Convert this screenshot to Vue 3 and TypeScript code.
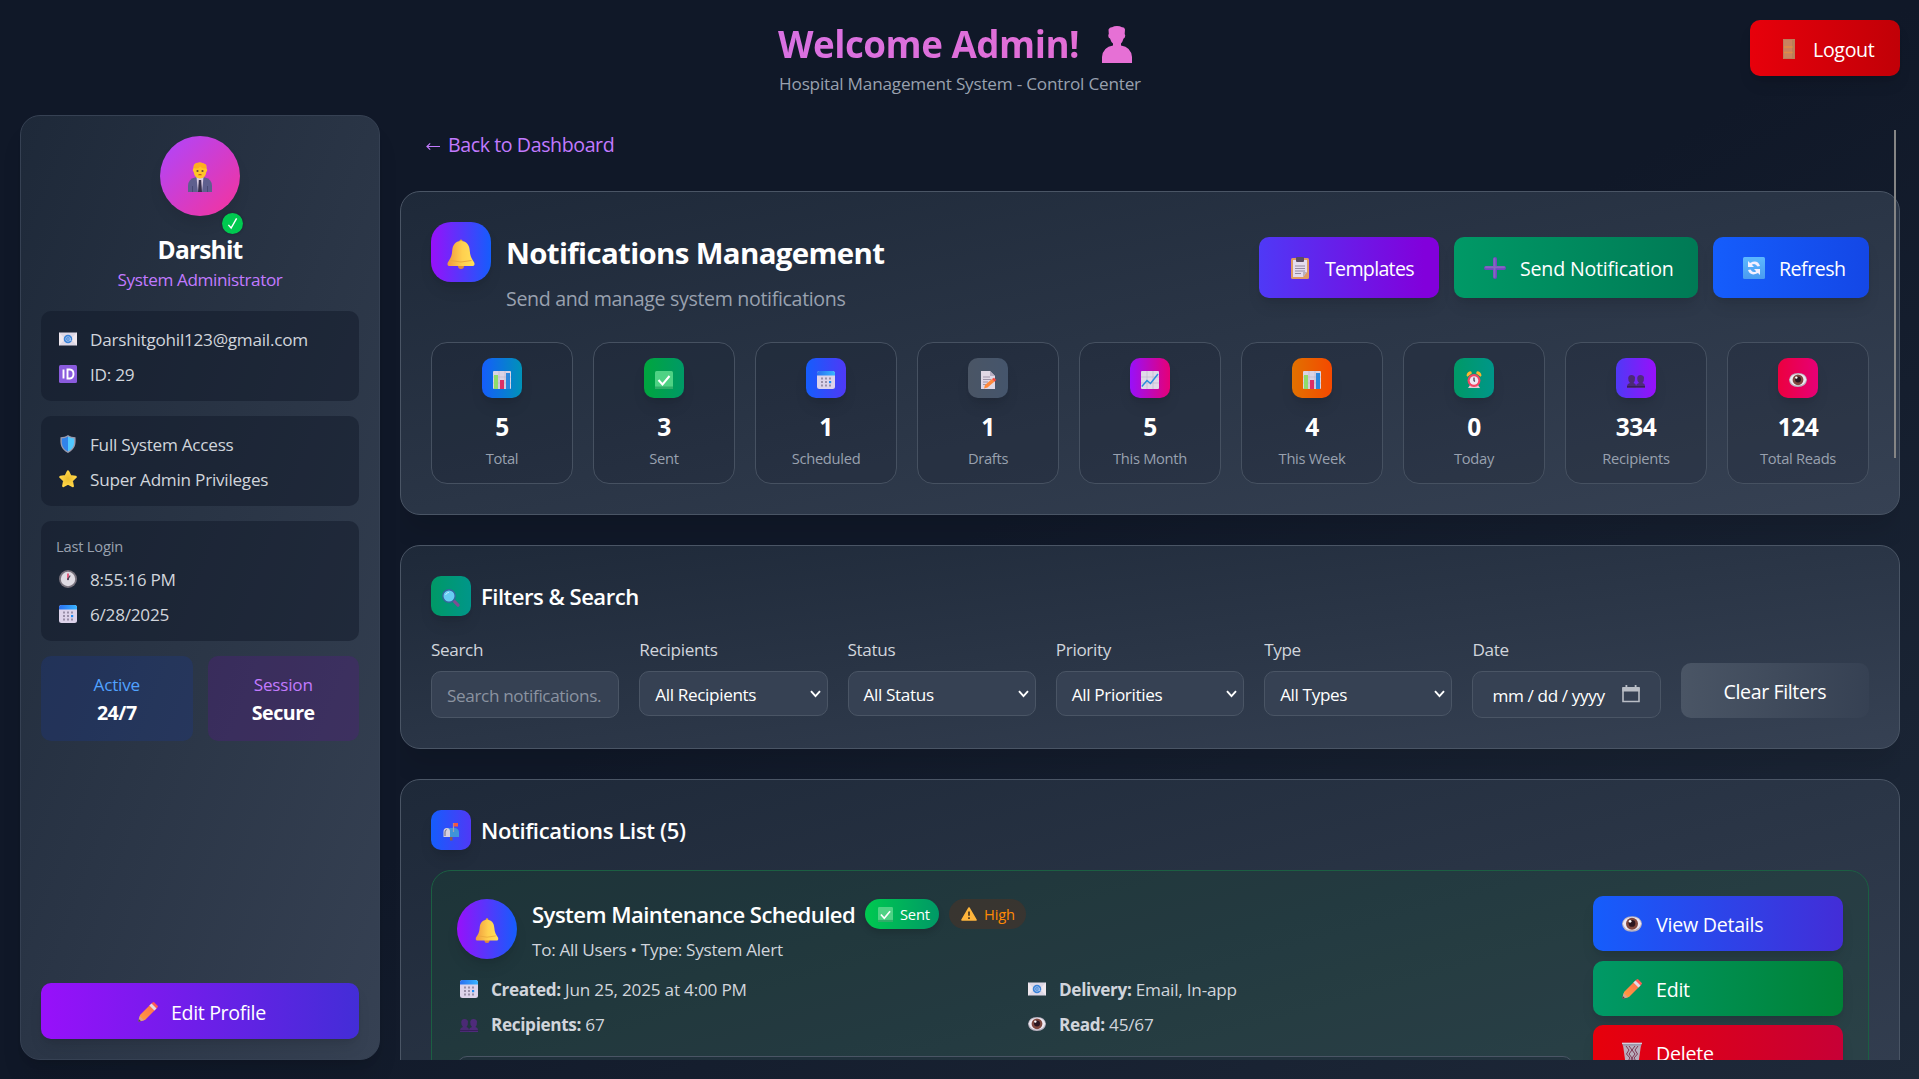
<script setup lang="ts">
interface Stat { value: string; label: string; icon: string; from: string; to: string }
interface Filter { label: string; value: string; kind: 'text' | 'select' | 'date' }

const stats: Stat[] = [
  { value: '5', label: 'Total', icon: 'bars', from: '#155dfc', to: '#0092b8' },
  { value: '3', label: 'Sent', icon: 'check', from: '#00a63e', to: '#009966' },
  { value: '1', label: 'Scheduled', icon: 'calendar', from: '#155dfc', to: '#4f39f6' },
  { value: '1', label: 'Drafts', icon: 'memo', from: '#4a5565', to: '#45556c' },
  { value: '5', label: 'This Month', icon: 'chart', from: '#9810fa', to: '#e60076' },
  { value: '4', label: 'This Week', icon: 'bars', from: '#e17100', to: '#f54900' },
  { value: '0', label: 'Today', icon: 'alarm', from: '#009966', to: '#009689' },
  { value: '334', label: 'Recipients', icon: 'people', from: '#4f39f6', to: '#9810fa' },
  { value: '124', label: 'Total Reads', icon: 'eye', from: '#ec003f', to: '#e60076' },
]

const filters: Filter[] = [
  { label: 'Search', value: 'Search notifications...', kind: 'text' },
  { label: 'Recipients', value: 'All Recipients', kind: 'select' },
  { label: 'Status', value: 'All Status', kind: 'select' },
  { label: 'Priority', value: 'All Priorities', kind: 'select' },
  { label: 'Type', value: 'All Types', kind: 'select' },
  { label: 'Date', value: 'mm / dd / yyyy', kind: 'date' },
]

const details = [
  { icon: 'calendar', label: 'Created:', value: 'Jun 25, 2025 at 4:00 PM' },
  { icon: 'mail', label: 'Delivery:', value: 'Email, In-app' },
  { icon: 'people', label: 'Recipients:', value: '67' },
  { icon: 'eye', label: 'Read:', value: '45/67' },
]
</script>

<template>
  <svg class="sprite" aria-hidden="true">
    <defs>
      <linearGradient id="g-bell" x1="0" x2="1"><stop offset="0" stop-color="#f09a3e" /><stop offset=".55" stop-color="#ffd04f" /><stop offset="1" stop-color="#ffe05a" /></linearGradient>
      <linearGradient id="g-pencil" x1="1" y1="0" x2="0" y2="1"><stop offset="0" stop-color="#ff6a50" /><stop offset="1" stop-color="#ffa23c" /></linearGradient>
      <linearGradient id="g-sky" x1="0" y1="0" x2="0" y2="1"><stop offset="0" stop-color="#5cb8ff" /><stop offset="1" stop-color="#4a9bf0" /></linearGradient>
      <linearGradient id="g-cal" x1="0" x2="1"><stop offset="0" stop-color="#2a6ff0" /><stop offset="1" stop-color="#37b4ff" /></linearGradient>
      <radialGradient id="g-star"><stop offset="0" stop-color="#e9bd2f" /><stop offset="1" stop-color="#ffd445" /></radialGradient>
    </defs>
    <symbol id="bell" viewBox="0 0 28 30">
      <circle cx="14" cy="2" r="1.6" fill="#e6a52f" /><circle cx="14" cy="27" r="3" fill="#e08a3a" />
      <path d="M14 2C8 2 5.5 6.500 5.200 12 4.900 17.500 3 20 .8 23.500.2 25 .4 27 2 27h24c1.600 0 1.800-2 1.200-3.500C25 20 23.100 17.500 22.800 12 22.500 6.500 20 2 14 2z" fill="url(#g-bell)" />
      <path d="M3.500 21.500Q14 24.500 24.500 21.500" fill="none" stroke="#e9a93c" stroke-width="1" />
    </symbol>
    <symbol id="mail" viewBox="0 0 18 18">
      <rect y="2.500" width="18" height="13" fill="#ded8e6" /><path d="M0 2.500l6 6.500-6 6.500M18 2.500L12 9l6 6.500" fill="#f0e8ee" />
      <circle cx="9" cy="9" r="4.300" fill="#3b83d8" /><circle cx="9" cy="9" r="2.300" fill="none" stroke="#b8cdf0" stroke-width=".8" /><path d="M11.200 8v2.500h1.300" fill="none" stroke="#b8cdf0" stroke-width=".8" /><circle cx="9" cy="9" r=".8" fill="#b8cdf0" />
    </symbol>
    <symbol id="idcard" viewBox="0 0 18 18">
      <rect width="18" height="18" rx="1.500" fill="#8a5bdd" /><path d="M4.500 4.500v9M8.500 4.500v9h2.300q3.700-.4 3.700-4.500t-3.700-4.500z" fill="none" stroke="#fff" stroke-width="1.900" />
    </symbol>
    <symbol id="shield" viewBox="0 0 18 18">
      <path d="M9 0C7 1.800 4 2.200 1.500 2.200 1 9 1.500 14 9 18 16.500 14 17 9 16.500 2.200 14 2.200 11 1.800 9 0z" fill="#9a9aad" /><path d="M9 1.600C7.200 3 5 3.400 2.900 3.400 2.600 9 3 13.300 9 16.500z" fill="#3183ea" /><path d="M9 1.600c1.800 1.400 4 1.800 6.100 1.800.3 5.600-.1 9.900-6.100 13.100z" fill="#50c8ff" />
    </symbol>
    <symbol id="star" viewBox="0 0 18 18">
      <path d="M9 1.500l2.300 4.800 5.300.7-3.900 3.700 1 5.300L9 13.500 4.300 16l1-5.300L1.400 7l5.300-.7z" fill="url(#g-star)" stroke="url(#g-star)" stroke-width="2.400" stroke-linejoin="round" />
    </symbol>
    <symbol id="clock" viewBox="0 0 18 18">
      <circle cx="9" cy="9" r="9" fill="#77717c" /><circle cx="9" cy="9" r="7.200" fill="#dfdbe3" /><path d="M9 9.500V3.500" stroke="#e6335c" stroke-width="1.500" /><path d="M9 9l2.200-3.500" stroke="#4b4358" stroke-width="1.200" /><circle cx="9" cy="9.300" r="1" fill="#4b4358" />
    </symbol>
    <symbol id="calendar" viewBox="0 0 18 18">
      <rect width="18" height="18" rx="2.500" fill="#ddd3ea" /><path d="M0 4.500V2.500A2.500 2.500 0 012.500 0h13A2.500 2.500 0 0118 2.500v2z" fill="url(#g-cal)" />
      <path d="M4 6.500h2v2H4zM8 6.500h2v2H8zM12 6.500h2v2h-2zM4 10h2v2H4zM8 10h2v2H8zM4 13.500h2v2H4zM8 13.500h2v2H8zM12 13.500h2v2h-2z" fill="#998fa8" /><path d="M12 10h2.200v2.200H12z" fill="#1f8cf5" />
    </symbol>
    <symbol id="pencil" viewBox="0 0 20 20">
      <path d="M2 13L13 2l5 5L7 18 1 19.500z" fill="url(#g-pencil)" /><path d="M13 2l1.700-1.600q.8-.7 1.600 0l3.300 3.300q.7.8 0 1.600L18 7z" fill="#ff5a56" /><path d="M11.400 3.600L13.500 1.500l5 5-2.100 2.100z" fill="#e2dbe6" /><path d="M1.600 14L.4 18.500q-.2 1.400 1.200 1.100L6 18.300z" fill="#d9a38c" /><path d="M.8 17l-.5 2q0 .8.8.7l2-.5z" fill="#4b4050" />
    </symbol>
    <symbol id="silhouette" viewBox="0 0 30 37">
      <path d="M6.500 3.500Q8 1 10 1.300 12 0 15 0t5 1.300q2.500-.3 3 2.200l-.3 4.500q1 1.200.2 3.200-.5 1-1.300 1.300Q20.500 16 19 17.500v2Q29 21 30 31v6H0v-6Q1 21 11 19.500v-2Q9 16 8 12.500q-1.500-.5-1.700-2.500-.1-1.500.5-2z" fill="currentColor" />
    </symbol>
    <symbol id="official" viewBox="0 0 24 30">
      <path d="M0 30v-6q0-7 7-8.500h10q7 1.500 7 8.500v6z" fill="#5e5f8e" /><path d="M8.500 15h7L14 30h-4z" fill="#d8cbe2" /><path d="M10.800 18h2.400l.8 12h-4z" fill="#352f4c" /><path d="M4.500 24v6M19.500 24v6" stroke="#484a75" />
      <path d="M5.500 6q-.3-4 3-4.500Q12-.7 15.500 1.500 19 2 18.500 6.500 20 8 18.300 10q-.8 6-6.300 6.500Q6.500 16 5.700 10 4 8 5.500 6z" fill="#ffc527" /><path d="M6 6q5 1.500 6-1.500 3 3 6 1.500l.3-3Q14-.8 8 1 5.500 2 6 6z" fill="#ffad20" /><circle cx="9.500" cy="9" r="1.100" fill="#6d4a3a" /><circle cx="14.500" cy="9" r="1.100" fill="#6d4a3a" /><path d="M10.500 13q1.500-1 3 0" fill="none" stroke="#c4451f" stroke-width="1.100" />
    </symbol>
    <symbol id="door" viewBox="0 0 12 20">
      <rect width="12" height="20" fill="#bd7a5a" /><path d="M1 1h8v18H1z" fill="#c9835f" /><path d="M1 8h9M1 13.500h9" stroke="#e18c47" stroke-width="1.500" /><path d="M10.300 0v20" stroke="#b78358" stroke-width="1.500" />
    </symbol>
    <symbol id="clipboard" viewBox="0 0 18 22">
      <rect y="1" width="18" height="21" rx="1.500" fill="#e09a62" /><path d="M2 3h14v12l-4 5H2z" fill="#e5dcee" /><path d="M12 20v-5h4z" fill="#b9aebf" /><rect x="5" width="8" height="5" rx="1" fill="#5b4d63" /><path d="M4 9h10M4 11.500h10M4 14h10M4 16.500h6" stroke="#948aa2" stroke-width="1" />
    </symbol>
    <symbol id="plus" viewBox="0 0 22 22">
      <path d="M11 2v18M2 11h18" stroke="#7048c0" stroke-width="4" stroke-linecap="round" /><path d="M10.500 2v18M2 10.300h18" stroke="#8567c0" stroke-width="2" stroke-linecap="round" />
    </symbol>
    <symbol id="sync" viewBox="0 0 22 22">
      <rect width="22" height="22" rx="1.500" fill="url(#g-sky)" /><path d="M5 4v6h6L8.800 7.800Q12 5.500 14.500 9.500l2.500-.6Q14.500 2 7 6zM17 18v-6h-6l2.200 2.200q-3.200 2.300-5.700-1.700l-2.500.6Q7.500 20 15 16z" fill="#f4efff" />
    </symbol>
    <symbol id="bars" viewBox="0 0 18 18">
      <rect width="18" height="18" rx="1" fill="#dad3e4" /><path d="M0 6h18M0 12h18M6 0v18M12 0v18" stroke="#bdb4cb" stroke-width=".6" /><path d="M1 4h4v14H1z" fill="#8fdc6b" /><path d="M7 9h4v9H7z" fill="#dd2f65" /><path d="M13 2h4v16h-4z" fill="#2c87dc" />
    </symbol>
    <symbol id="chart" viewBox="0 0 18 18">
      <rect width="18" height="18" rx="1" fill="#e0dae8" /><path d="M0 6h18M0 12h18M6 0v18M12 0v18" stroke="#bdb4cb" stroke-width=".6" /><path d="M.8 15.500L6 9.500l3.500 3L17 3" fill="none" stroke="#2c8ddd" stroke-width="1.500" />
    </symbol>
    <symbol id="check" viewBox="0 0 18 18">
      <rect width="18" height="18" rx="1.500" fill="#4fd284" /><rect y="15.500" width="18" height="2.500" fill="#2fae69" /><path d="M3.500 9l4 4.500L14.500 5" fill="none" stroke="#fff" stroke-width="2" />
    </symbol>
    <symbol id="memo" viewBox="0 0 18 18">
      <path d="M2 0h9l5 5v13H2z" fill="#e0d8e6" /><path d="M11 0v5h5z" fill="#b7adc0" /><path d="M4 6h7M4 8.500h8M4 11h5M4 13.500h4" stroke="#9e94aa" /><path d="M6 14l7-6 2.500 2.500-7 6L5 17.500z" fill="#ff8a3d" /><path d="M13 8l2-1.200 2.300 2.300-1.800 1.600z" fill="#f2473c" />
    </symbol>
    <symbol id="alarm" viewBox="0 0 18 18">
      <path d="M1.500 4.500Q2 .5 6 .3l1 2-4.500 3.500zM16.500 4.500Q16 .5 12 .3l-1 2 4.500 3.500z" fill="#ffb52e" /><path d="M3 17l2-3h8l2 3z" fill="#e5c5d4" /><circle cx="9" cy="9.500" r="6.500" fill="#f24463" /><circle cx="9" cy="9.500" r="4.300" fill="#eee6f2" /><path d="M9 6.500v3l.8 1" fill="none" stroke="#4d3a55" stroke-width="1.300" />
    </symbol>
    <symbol id="people" viewBox="0 0 18 18">
      <path d="M0 17v-2q.3-2.500 3-3Q1 10 1.200 7 1.500 4 4.500 4T8 6.500Q8.200 10 6.500 12 9 12.500 9 15v2z" fill="#4b2a75" /><path d="M9 17v-2q.3-2.500 3-3-2-2-1.800-5Q10.500 4 13.500 4T17 6.500Q17.200 10 15.500 12 18 12.500 18 15v2z" fill="#4f2b7b" /><path d="M0 15.500h18" stroke="#371e5a" />
    </symbol>
    <symbol id="eye" viewBox="0 0 18 18">
      <path d="M0 9Q1 2.200 9 2t9 7q-1 6.800-9 7T0 9z" fill="#b9b2bf" /><path d="M.8 8.500Q2 3.200 9 3t8.200 5.500Q16 14.300 9 14.500T.8 8.500z" fill="#efe9f2" /><circle cx="9" cy="8.800" r="5.400" fill="#80483f" /><circle cx="9" cy="8.500" r="3" fill="#2b1620" /><circle cx="7.300" cy="6.600" r="1.200" fill="#fff" />
    </symbol>
    <symbol id="lens" viewBox="0 0 18 18">
      <path d="M11 11l5 5.200" stroke="#7e4d93" stroke-width="3.200" stroke-linecap="round" /><circle cx="7" cy="7" r="6.200" fill="#67cdf2" stroke="#35669e" stroke-width="1.400" /><path d="M3.500 6Q4.500 3.500 7 3.300" stroke="#b8ecff" fill="none" />
    </symbol>
    <symbol id="mailbox" viewBox="0 0 18 18">
      <path d="M8 12h2.500v5.500H8z" fill="#8b5b50" /><path d="M4 5h9q4 .5 4 4.500V14H4z" fill="#3f93d8" /><path d="M1.500 14V8.500Q1.500 5 4.800 5T8 8.500V14z" fill="#d5cfe0" /><path d="M3 13V9q0-2.300 1.800-2.300" stroke="#6e6a82" fill="none" /><path d="M11.500 9V0" stroke="#9da3b5" stroke-width="1.200" /><path d="M11.500 0H16v3.500h-4.500z" fill="#f2573e" />
    </symbol>
    <symbol id="warning" viewBox="0 0 16 14">
      <path d="M8 1l7 12H1z" fill="#ffb53c" stroke="#ffb53c" stroke-width="1.600" stroke-linejoin="round" /><path d="M8 4.500v4.300M8 10.200v1.700" stroke="#4a3620" stroke-width="1.700" />
    </symbol>
    <symbol id="trash" viewBox="0 0 20 22">
      <path d="M1 3h18l-2.500 18q-6.500 2-13 0z" fill="#b9aebd" /><path d="M4 4l3 4-2.500 4L8 16l-2.500 4M16 4l-3 4 2.500 4L12 16l2.500 4M7 4l3 4-3 4 3 4-2 4M13 4l-3 4 3 4-3 4 2 4" fill="none" stroke="#7d3552" /><path d="M0 .8h20l-.8 3H.8z" fill="#9c96aa" /><path d="M0 .8h20v1.200H0z" fill="#d4cedb" />
    </symbol>
  </svg>

  <div class="page">
    <header class="header">
      <div class="heading">
        <h1>Welcome Admin! <svg class="silhouette"><use href="#silhouette" /></svg></h1>
        <p>Hospital Management System - Control Center</p>
      </div>
      <button class="btn logout"><svg><use href="#door" /></svg><span>Logout</span></button>
    </header>

    <div class="body">
      <aside class="sidebar">
        <div class="avatar">
          <svg><use href="#official" /></svg>
          <span class="online"><svg viewBox="0 0 12 14"><path d="M1.500 8.500l3 3.500L10.500 1.500" fill="none" stroke="#fff" stroke-width="1.600" /></svg></span>
        </div>
        <h2>Darshit</h2>
        <p class="role">System Administrator</p>
        <div class="box">
          <div class="line"><svg><use href="#mail" /></svg><span>Darshitgohil123@gmail.com</span></div>
          <div class="line"><svg><use href="#idcard" /></svg><span>ID: 29</span></div>
        </div>
        <div class="box">
          <div class="line"><svg><use href="#shield" /></svg><span>Full System Access</span></div>
          <div class="line"><svg><use href="#star" /></svg><span>Super Admin Privileges</span></div>
        </div>
        <div class="box">
          <small>Last Login</small>
          <div class="line"><svg><use href="#clock" /></svg><span>8:55:16 PM</span></div>
          <div class="line"><svg><use href="#calendar" /></svg><span>6/28/2025</span></div>
        </div>
        <div class="tiles">
          <div class="tile blue"><span>Active</span><b>24/7</b></div>
          <div class="tile violet"><span>Session</span><b>Secure</b></div>
        </div>
        <button class="btn edit-profile"><svg><use href="#pencil" /></svg><span>Edit Profile</span></button>
      </aside>

      <main class="main">
        <a class="back"><svg viewBox="0 0 15 9"><path d="M15 4.500H1.200M4.500 1.200L1 4.500l3.500 3.300" fill="none" stroke="currentColor" stroke-width="1.200" /></svg><span>Back to Dashboard</span></a>

        <section class="card">
          <div class="top">
            <div class="bell-box"><svg><use href="#bell" /></svg></div>
            <div class="titles">
              <h2>Notifications Management</h2>
              <p>Send and manage system notifications</p>
            </div>
            <div class="actions">
              <button class="btn tpl"><svg><use href="#clipboard" /></svg><span>Templates</span></button>
              <button class="btn send"><svg><use href="#plus" /></svg><span>Send Notification</span></button>
              <button class="btn refresh"><svg><use href="#sync" /></svg><span>Refresh</span></button>
            </div>
          </div>
          <div class="stats">
            <div v-for="s in stats" :key="s.label" class="stat">
              <div class="chip" :style="{ backgroundImage: `linear-gradient(90deg, ${s.from}, ${s.to})` }"><svg><use :href="'#' + s.icon" /></svg></div>
              <strong>{{ s.value }}</strong>
              <span>{{ s.label }}</span>
            </div>
          </div>
        </section>

        <section class="card">
          <h3><span class="chip teal"><svg><use href="#lens" /></svg></span><span>Filters &amp; Search</span></h3>
          <div class="filters">
            <div v-for="f in filters" :key="f.label" class="field">
              <label>{{ f.label }}</label>
              <div class="control" :class="f.kind">
                <span>{{ f.value }}</span>
                <svg v-if="f.kind === 'select'" class="chevron" viewBox="0 0 11 8"><path d="M1 1.200l4.500 5 4.500-5" fill="none" stroke="#fff" stroke-width="1.900" /></svg>
                <svg v-if="f.kind === 'date'" class="picker" viewBox="0 0 18 18"><path d="M1 3.500h16v13H1z" fill="none" stroke="#b9bdc5" stroke-width="1.600" /><path d="M.3 2h17.400v4.500H.3zM3.500 0h1.800v3H3.500zM12.700 0h1.800v3h-1.800z" fill="#b9bdc5" /></svg>
              </div>
            </div>
            <button class="clear">Clear Filters</button>
          </div>
        </section>

        <section class="card">
          <h3 class="list-title"><span class="chip indigo"><svg><use href="#mailbox" /></svg></span><span>Notifications List (5)</span></h3>
          <article class="item">
            <div class="info">
              <div class="summary">
                <div class="circle"><svg><use href="#bell" /></svg></div>
                <div>
                  <div class="name">
                    <h4>System Maintenance Scheduled</h4>
                    <span class="badge sent"><svg><use href="#check" /></svg>Sent</span>
                    <span class="badge high"><svg><use href="#warning" /></svg>High</span>
                  </div>
                  <p>To: All Users • Type: System Alert</p>
                </div>
              </div>
              <div class="details">
                <div v-for="d in details" :key="d.label" class="line"><svg><use :href="'#' + d.icon" /></svg><span><b>{{ d.label }}</b> {{ d.value }}</span></div>
              </div>
              <div class="message"></div>
            </div>
            <div class="ops">
              <button class="btn view"><svg><use href="#eye" /></svg><span>View Details</span></button>
              <button class="btn edit"><svg><use href="#pencil" /></svg><span>Edit</span></button>
              <button class="btn delete"><svg><use href="#trash" /></svg><span>Delete</span></button>
            </div>
          </article>
        </section>
      </main>
      <div class="scrollbar"></div>
    </div>
  </div>
</template>

<style>
body { margin: 0; overflow: hidden; background: #101828; }
</style>

<style scoped>
* { box-sizing: border-box; margin: 0; }
.sprite { position: absolute; width: 0; height: 0; }
svg { display: block; flex: none; }
.page {
  width: 1919px; height: 1079px; padding: 20px 19px 19px 20px; display: flex; flex-direction: column; overflow: hidden;
  font-family: "Segoe UI", "Open Sans", "Noto Sans", sans-serif; font-size: 17.5px; font-size-adjust: 0.525; letter-spacing: -0.012em; line-height: 25px; color: #d1d5dc; white-space: nowrap;
  background: linear-gradient(to bottom right, #101828, #101828 50%, #1e2939);
}
button { font: inherit; font-size-adjust: inherit; letter-spacing: inherit; color: #fff; border: 0; padding: 0; white-space: nowrap; }
.btn { display: flex; align-items: center; height: 56px; border-radius: 10px; font-size: 20px; font-weight: 450; letter-spacing: -0.35px; box-shadow: 0 10px 15px -3px #0000001a, 0 4px 6px -4px #0000001a; }
.btn span { padding-top: 3px; }

.header { position: relative; height: 95px; }
.heading { text-align: center; }
h1 {
  display: flex; justify-content: center; align-items: center; gap: 23px; height: 47px; padding: 2px 10px 0 0; font-size: 37.5px; font-weight: 700; letter-spacing: -0.5px;
  background: linear-gradient(90deg, #c27aff, #fb64b6); -webkit-background-clip: text; background-clip: text; color: transparent;
}
.silhouette { width: 30px; height: 37px; margin-top: -1px; color: #e670d5; }
.heading p { margin-top: 4px; color: #99a1af; }
.logout { position: absolute; right: 0; top: 0; width: 150px; padding-left: 33px; gap: 18px; background: linear-gradient(90deg, #e7000b, #c10007); }
.logout svg { width: 12px; height: 20px; margin-top: 2px; }

.body { position: relative; display: flex; gap: 20px; height: 945px; }
.sidebar {
  width: 360px; padding: 20px; display: flex; flex-direction: column; border: 1px solid #364153; border-radius: 20px;
  background: linear-gradient(to bottom right, #1e2939, #364153); box-shadow: 0 20px 25px -5px #0000001a, 0 8px 10px -6px #0000001a;
}
.avatar { position: relative; align-self: center; display: flex; align-items: center; justify-content: center; width: 80px; height: 80px; border-radius: 50%; background: linear-gradient(to bottom right, #ad46ff, #f6339a); box-shadow: 0 10px 15px -3px #0000001a; }
.avatar > svg { width: 24px; height: 30px; margin-top: 2px; }
.online { position: absolute; right: -3px; bottom: -18px; width: 21px; height: 21px; border-radius: 50%; display: flex; align-items: center; justify-content: center; background: #00c950; box-shadow: 0 0 3px #0005; }
.online svg { width: 11px; height: 13px; }
.sidebar h2 { margin-top: 16px; line-height: 35px; font-size: 25px; font-weight: 700; letter-spacing: -0.8px; color: #fff; text-align: center; }
.role { margin-bottom: 18px; color: #c27aff; text-align: center; line-height: 26px; letter-spacing: -0.4px; }
.box { margin-bottom: 15px; padding: 15px; border-radius: 10px; background: #10182880; display: flex; flex-direction: column; gap: 10px; }
.box small { font-size: 15px; line-height: 20px; color: #99a1af; }
.line { display: flex; align-items: center; gap: 13px; height: 25px; padding-left: 3px; }
.sidebar .line { letter-spacing: -0.25px; }
.line span { padding-top: 2px; }
.line svg { width: 18px; height: 18px; }
.tiles { display: flex; gap: 15px; }
.tile { flex: 1; height: 85px; padding: 16px 0 0; border-radius: 10px; text-align: center; display: flex; flex-direction: column; }
.tile b { margin-top: 1px; font-size: 20px; line-height: 30px; letter-spacing: -0.5px; color: #fff; }
.blue { background: #1c398e4d; color: #51a2ff; }
.violet { background: #59168b4d; color: #c27aff; }
.edit-profile { margin-top: auto; padding-left: 97px; gap: 13px; background: linear-gradient(90deg, #9810fa, #432dd7); }
.edit-profile svg { width: 20px; height: 20px; margin-top: 1px; }

.main { width: 1500px; overflow: hidden; display: flex; flex-direction: column; }
.back { display: flex; flex: none; align-items: center; gap: 8px; height: 76px; padding: 0 0 18px 26px; font-size: 20px; color: #c27aff; font-weight: 450; letter-spacing: -0.42px; }
.back svg { width: 14px; height: 9px; margin-top: 5px; }
.card { flex: none; margin-bottom: 30px; padding: 30px; border: 1px solid #4a5565; border-radius: 20px; background: linear-gradient(to bottom right, #1e2939, #364153); box-shadow: 0 20px 25px -5px #0000001a; }
.top { display: flex; height: 91px; margin-bottom: 29px; }
.bell-box, .circle { display: flex; align-items: center; justify-content: center; width: 60px; height: 60px; border-radius: 20px; background: linear-gradient(90deg, #9810fa, #155dfc); box-shadow: 0 10px 15px -3px #0000001a, 0 4px 6px -4px #0000001a; }
.bell-box svg { width: 28px; height: 30px; margin-top: 3px; }
.titles { margin-left: 15px; flex: 1; }
.titles h2 { height: 60px; padding-top: 1px; font-size: 30px; line-height: 60px; font-weight: 700; letter-spacing: -0.64px; color: #fff; }
.titles p { padding-top: 2px; font-size: 20px; line-height: 30px; letter-spacing: -0.35px; color: #99a1af; }
.actions { display: flex; align-items: center; gap: 15px; }
.actions .btn { height: 61px; }
.actions .btn span { padding-top: 2px; }
.actions svg { width: 22px; height: 22px; margin-top: 1px; }
.tpl { width: 180px; padding-left: 30px; gap: 14px; letter-spacing: -0.7px; background: linear-gradient(90deg, #4f39f6, #8200db 92%); }
.send { width: 244px; padding-left: 30px; gap: 14px; letter-spacing: -0.2px; background: linear-gradient(90deg, #009966, #007a55); }
.refresh { width: 156px; padding-left: 30px; gap: 14px; letter-spacing: -0.5px; background: linear-gradient(90deg, #155dfc, #1447e6); }
.stats { display: flex; gap: 20px; }
.stat { flex: 1; height: 142px; padding-top: 15px; display: flex; flex-direction: column; align-items: center; border: 1px solid #465161; border-radius: 16px; background: #1018282e; }
.chip { display: flex; align-items: center; justify-content: center; width: 40px; height: 40px; border-radius: 10px; box-shadow: 0 10px 15px -3px #0000001a, 0 4px 6px -4px #0000001a; }
.chip svg { width: 18px; height: 18px; margin-top: 4px; }
.stat strong { margin-top: 11px; font-size: 25px; line-height: 35px; letter-spacing: -0.5px; color: #fff; }
.stat span { margin-top: 4px; font-size: 15px; line-height: 20px; letter-spacing: -0.3px; color: #99a1af; }

h3 { display: flex; align-items: center; gap: 10px; height: 40px; font-size: 22.5px; font-weight: 600; letter-spacing: -0.5px; color: #fff; }
.list-title { letter-spacing: -0.35px; }
.teal { background: linear-gradient(90deg, #009966, #009689); }
.indigo { background: linear-gradient(90deg, #155dfc, #4f39f6); }
.filters { margin-top: 20px; display: flex; gap: 20px; align-items: flex-end; }
.field { flex: 1 1 0; min-width: 0; height: 82px; letter-spacing: -0.37px; }
.field label { display: block; padding-top: 1px; margin-bottom: 9px; }
.control { display: flex; align-items: center; justify-content: space-between; height: 45px; padding: 0 6px 0 15px; border: 1px solid #4a5565; border-radius: 10px; background: #364153; color: #fff; }
.control span { padding-top: 1px; }
.text, .date { height: 47px; padding-right: 16px; }
.text span { overflow: hidden; color: #8b93a1; }
.date { padding: 0 20px 0 19px; }
.chevron { width: 11px; height: 8px; }
.picker { width: 18px; height: 18px; margin-top: -1px; }
.clear { flex: 1 1 0; height: 55px; padding-top: 2px; border-radius: 10px; font-size: 20px; font-weight: 450; letter-spacing: -0.4px; background: linear-gradient(90deg, #4a5565, #364153); }

.item { margin-top: 20px; height: 300px; padding: 25px; display: flex; gap: 20px; border: 1px solid #1b5f42; border-radius: 20px; background: #0d542b33; }
.info { flex: 1; padding-top: 3px; }
.summary { display: flex; gap: 15px; height: 62px; margin-bottom: 15px; }
.summary p { letter-spacing: -0.3px; }
.circle { border-radius: 50%; }
.circle svg { width: 24px; height: 25px; margin-top: 2px; }
.name { display: flex; align-items: center; height: 30px; margin-bottom: 8px; }
.name h4 { width: 322px; margin-right: 11px; font-size: 22.5px; font-weight: 600; letter-spacing: -0.53px; color: #fff; }
.badge { display: flex; align-items: center; height: 30px; margin-right: 10px; border-radius: 15px; font-size: 15px; font-weight: 450; }
.badge svg { margin-right: 7px; }
.sent { width: 74px; padding-left: 13px; color: #fff; background: linear-gradient(90deg, #00c950, #009966); box-shadow: 0 4px 6px #0002; }
.sent svg { width: 15px; height: 15px; }
.high { width: 77px; padding-left: 12px; color: #ff8904; background: #7e2a0c40; }
.high svg { width: 16px; height: 14px; }
.details { display: grid; grid-template-columns: 1fr 1fr; gap: 10px 20px; }
.details b { font-weight: 700; letter-spacing: -0.35px; }
.message { height: 90px; margin-top: 20px; border: 1px solid #4a5565; border-radius: 10px; background: #1e293980; }
.ops { width: 250px; display: flex; flex-direction: column; gap: 9.7px; }
.ops .btn { flex: none; height: 55px; padding-left: 29px; gap: 14px; letter-spacing: -0.25px; }
.ops .btn span { padding-top: 2px; }
.ops svg { width: 20px; height: 20px; margin-top: 1px; }
.ops .delete svg { height: 22px; }
.view { background: linear-gradient(90deg, #155dfc, #432dd7); }
.edit { background: linear-gradient(90deg, #009966, #008236); }
.delete { background: linear-gradient(90deg, #e7000b, #c70036); }

.scrollbar { position: absolute; right: 4px; top: 15px; width: 2px; height: 328px; background: #858585; }
</style>
